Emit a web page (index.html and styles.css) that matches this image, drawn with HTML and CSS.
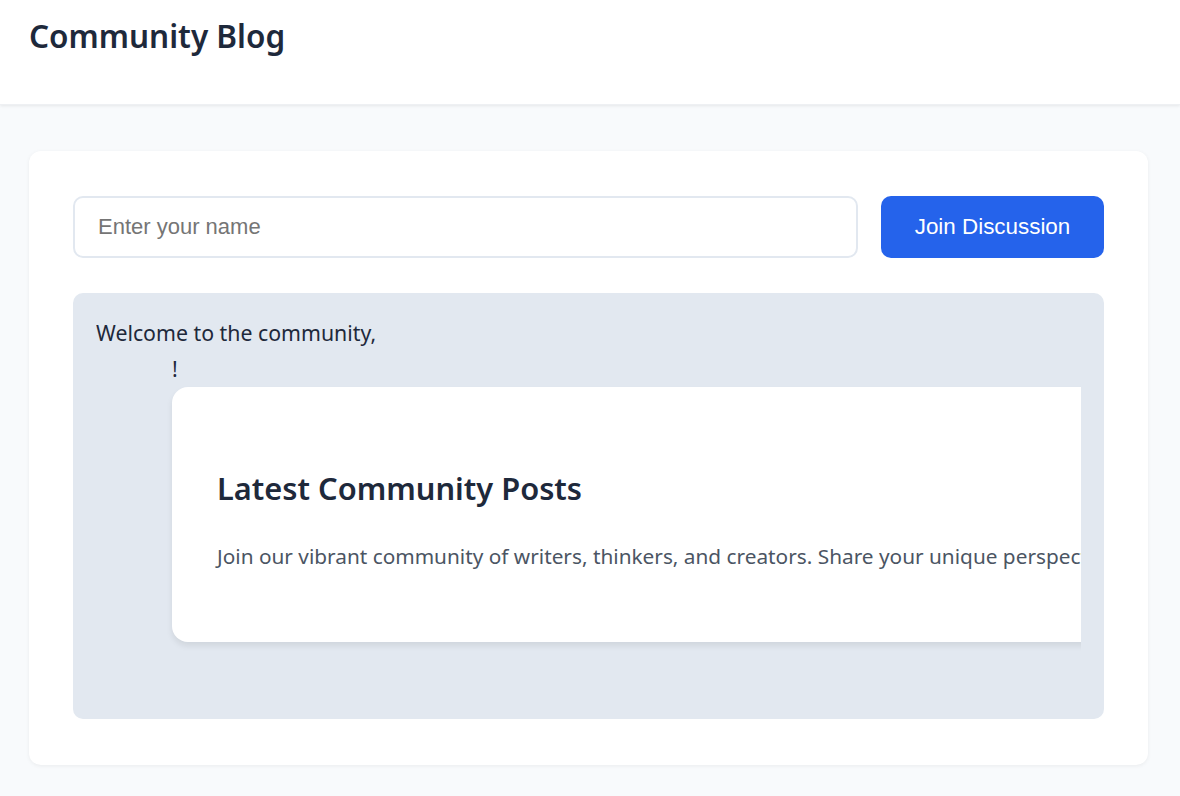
FILE: index.html
```html
<!DOCTYPE html>
<html lang="en">
<head>
<meta charset="utf-8">
<title>Community Blog</title>
<link rel="stylesheet" href="styles.css">
</head>
<body>
<header class="site-header">
  <h1 class="site-title">Community Blog</h1>
</header>
<main class="page">
  <section class="panel">
    <form class="join-form">
      <input class="name-input" type="text" placeholder="Enter your name">
      <button class="join-btn" type="button">Join Discussion</button>
    </form>
    <div class="welcome-box">
      <div class="welcome-inner">
        <div class="welcome-line">Welcome to the community,</div>
        <div class="welcome-bang">!</div>
        <div class="post-card">
          <h2 class="post-title">Latest Community Posts</h2>
          <p class="post-text">Join our vibrant community of writers, thinkers, and creators. Share your unique perspectives and connect with others.</p>
        </div>
      </div>
    </div>
  </section>
</main>
</body>
</html>
```
FILE: styles.css
```css
* { box-sizing: border-box; }
html, body { margin: 0; padding: 0; }
body {
  background: #f8fafc;
  font-family: "Noto Sans", "Open Sans", sans-serif;
  color: #1e293b;
  height: 796px;
  overflow: hidden;
}
.site-header {
  background: #ffffff;
  height: 105px;
  padding: 14px 29px 0;
  box-shadow: 0 1px 3px rgba(0,0,0,0.08);
  border-bottom: 1px solid #eef0f3;
}
.site-title {
  margin: 0;
  font-size: 31.5px;
  line-height: 44px;
  font-weight: 600;
  color: #1e293b;
}
.page {
  padding: 46px 32px 0 29px;
}
.panel {
  background: #ffffff;
  border-radius: 12px;
  box-shadow: 0 1px 4px rgba(0,0,0,0.06);
  padding: 45px 44px;
  height: 614px;
}
.join-form {
  display: flex;
  gap: 23px;
  margin: 0;
}
.name-input {
  flex: 1;
  min-width: 0;
  height: 62px;
  border: 2px solid #e2e8f0;
  border-radius: 10px;
  padding: 0 23px;
  font-family: "Liberation Sans", Arial, sans-serif;
  font-size: 22px;
  color: #1e293b;
  background: #fff;
  outline: none;
}
.name-input::placeholder { color: #757575; }
.join-btn {
  flex: 0 0 223px;
  height: 62px;
  border: none;
  border-radius: 10px;
  background: #2563eb;
  color: #ffffff;
  font-family: "Liberation Sans", Arial, sans-serif;
  font-size: 22.4px;
}
.welcome-box {
  margin-top: 35px;
  background: #e2e8f0;
  border-radius: 10px;
  padding: 22px 23px 0;
  height: 426px;
}
.welcome-inner {
  overflow: hidden;
  font-size: 21.3px;
  line-height: 36px;
  color: #1e293b;
  padding-bottom: 10px;
}
.welcome-bang {
  padding-left: 76px;
}
.post-card {
  display: inline-block;
  vertical-align: top;
  margin: 0 0 0 76px;
  background: #ffffff;
  border-radius: 16px;
  box-shadow: 0 4px 6px rgba(0,0,0,0.08);
  padding: 45px;
  height: 255px;
}
.post-title {
  margin: 36px 0 0;
  font-size: 30.8px;
  line-height: 40px;
  font-weight: 600;
  color: #1e293b;
}
.post-text {
  margin: 33px 0 0;
  font-size: 20.8px;
  line-height: 31.2px;
  color: #4b5563;
  white-space: nowrap;
}
```
